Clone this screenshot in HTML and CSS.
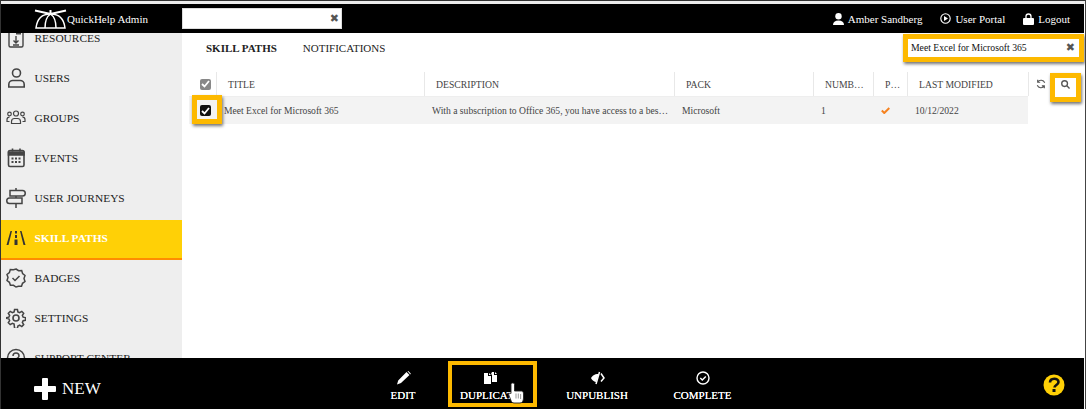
FILE: index.html
```html
<!DOCTYPE html>
<html lang="en">
<head>
<meta charset="utf-8">
<title>QuickHelp Admin</title>
<link rel="stylesheet" href="styles.css">
</head>
<body>
<div class="app">
  <header class="topbar">
    <div class="brand">
      <svg class="logo" width="33" height="20" viewBox="0 0 33 20" fill="none" stroke="#fff" stroke-width="1.500">
        <path d="M2 19C3 10 8 5 16.500 5S30 10 31 19z"/>
        <path d="M11 19C11 11 13.500 7 16.500 5c3 2 5.500 6 5.500 14"/>
        <path d="M1 1.500l15.500 3.500L32 1.500M16.500 5V1" stroke-width="2"/>
      </svg>
      <span>QuickHelp Admin</span>
    </div>
    <div class="top-search"><span class="x">✖</span></div>
    <nav class="user-nav">
      <span class="user-link"><svg width="11" height="12" viewBox="0 0 11 12" fill="#fff"><circle cx="5.500" cy="3.200" r="3.200"/><path d="M0 12c0-3 2-4.500 5.500-4.500S11 9 11 12z"/></svg>Amber Sandberg</span>
      <span class="user-link"><svg width="11" height="11" viewBox="0 0 11 11"><circle cx="5.500" cy="5.500" r="4.700" fill="none" stroke="#fff" stroke-width="1.100"/><path d="M4 3l4 2.500L4 8z" fill="#fff"/></svg>User Portal</span>
      <span class="user-link"><svg width="11" height="12" viewBox="0 0 11 12"><path d="M3 6V3.500a2.500 2.500 0 015 0V6" fill="none" stroke="#fff" stroke-width="1.300"/><rect y="5" width="11" height="7" rx="1" fill="#fff"/></svg>Logout</span>
    </nav>
  </header>

  <div class="middle">
    <aside class="sidebar">
      <ul class="side-list">
        <li class="side-item"><svg class="side-icon" viewBox="0 0 20 20" fill="none" stroke="#444" stroke-width="1.400"><rect x="3" y="-6" width="14" height="25" rx="1.500"/><path d="M10 8v7M7.500 12.500L10 15l2.500-2.500M7 17h6"/><path d="M10 4h5v2.500h-5z" fill="#444" stroke="none"/></svg>RESOURCES</li>
        <li class="side-item"><svg class="side-icon" viewBox="0 0 20 20" fill="none" stroke="#444" stroke-width="1.600"><circle cx="10.500" cy="5" r="4"/><path d="M2.800 19v-2.500c0-2.500 2-4 4-4h7.400c2 0 4 1.500 4 4V19z"/></svg>USERS</li>
        <li class="side-item"><svg class="side-icon" viewBox="0 0 20 20" fill="none" stroke="#444" stroke-width="1.200"><circle cx="10" cy="5.500" r="2.500"/><circle cx="3.500" cy="6" r="1.800"/><circle cx="16.500" cy="6" r="1.800"/><path d="M5.500 15.500v-2c0-2 1.500-3 3-3h3c1.500 0 3 1 3 3v2zM3.500 13.500H1v-2c0-1.500 1-2.300 2.500-2.300M16.500 13.500H19v-2c0-1.500-1-2.300-2.500-2.300"/></svg>GROUPS</li>
        <li class="side-item"><svg class="side-icon" viewBox="0 0 20 20" fill="none" stroke="#444" stroke-width="1.600"><rect x="2.500" y="2.500" width="15.500" height="16" rx="1.500"/><path d="M2.500 4h15.500v3H2.500z" fill="#444"/><path d="M6.500 .5v3M14 .5v3"/><path d="M5.500 9.500h2v2h-2zM9 9.500h2v2H9zM12.500 9.500h2v2h-2zM5.500 13h2v2h-2zM9 13h2v2H9zM12.500 13h2v2h-2z" fill="#444" stroke="none"/></svg>EVENTS</li>
        <li class="side-item"><svg class="side-icon" viewBox="0 0 20 20" fill="none" stroke="#444" stroke-width="1.500"><path d="M10 0v2.500M10 8v2M10 15.500V20M4 2.500h12.500a2.700 2.700 0 010 5.500H4zM16 10H3.500a2.700 2.700 0 000 5.500H16z"/></svg>USER JOURNEYS</li>
        <li class="side-item active"><svg class="side-icon" viewBox="0 0 20 20" fill="#333"><path d="M4.500 3h1.500L2.500 17H.5zM14 3h1.500l4 14h-2zM9 3h2v2.500H9zM9 7h2v3H9zM8.500 11.500h3V17h-3z"/></svg>SKILL PATHS</li>
        <li class="side-item"><svg class="side-icon" viewBox="0 0 20 20" fill="none" stroke="#444" stroke-width="1.500"><path d="M10 1l2.600 1.700 3.100-.1.900 3 2.400 1.900-1 3 1 3-2.500 1.800-1 3-3 0L10 19l-2.500-1.700-3.100 0-1-3L1 12.500l1-3-1-3 2.400-1.900.9-3 3.100.1z"/><path d="M6.500 10l2.500 2.500 4.500-4.500"/></svg>BADGES</li>
        <li class="side-item"><svg class="side-icon" viewBox="0 0 20 20" fill="none" stroke="#444" stroke-width="1.600"><circle cx="10" cy="10" r="3"/><path d="M8.500 1h3l.5 2.600 1.800.8 2.300-1.400 2 2.100-1.400 2.200.8 1.800 2.500.5v2.800l-2.500.5-.8 1.800 1.400 2.200-2 2.100-2.300-1.400-1.800.8-.5 2.600h-3L8 16.400l-1.800-.8-2.300 1.400-2-2.100 1.400-2.200-.8-1.800-2.500-.5V9.600l2.500-.5.8-1.800L1.900 5.100l2-2.100 2.300 1.400L8 3.600z" transform="translate(.5 .5) scale(.95)"/></svg>SETTINGS</li>
        <li class="side-item"><svg class="side-icon" viewBox="0 0 20 20" fill="none" stroke="#444" stroke-width="1.500"><circle cx="10" cy="10" r="8.500"/><path d="M7 8c0-4 6-4 6 0 0 2-3 2-3 4M10 14v1.500"/></svg>SUPPORT CENTER</li>
      </ul>
    </aside>

    <main class="content">
      <div class="tabs-row">
        <div class="tabs">
          <span class="tab tab-on">SKILL PATHS</span>
          <span class="tab">NOTIFICATIONS</span>
        </div>
        <div class="filter">Meet Excel for Microsoft 365<span class="x">✖</span></div>
      </div>
      <div class="table-wrap">
        <div class="grid head">
          <div class="cell check-cell"><span class="check check-head"><svg width="9" height="8" viewBox="0 0 9 8" fill="none" stroke="#fff" stroke-width="1.800"><path d="M1 4l2.500 2.500L8 1"/></svg></span></div>
          <div class="cell">TITLE</div>
          <div class="cell">DESCRIPTION</div>
          <div class="cell">PACK</div>
          <div class="cell">NUMB…</div>
          <div class="cell">P…</div>
          <div class="cell">LAST MODIFIED</div>
          <div class="tools">
            <svg width="10" height="10" viewBox="0 0 12 12" fill="none" stroke="#555" stroke-width="1.300"><path d="M10.500 4.500A5 5 0 002 3.500M1.500 7.500a5 5 0 008.500 1M2 .8v3h3M10 11.200v-3H7"/></svg>
            <svg width="9" height="9" viewBox="0 0 10 10" fill="none" stroke="#555" stroke-width="1.500"><circle cx="4" cy="4" r="3.200"/><path d="M6.500 6.500L9.500 9.500"/></svg>
          </div>
        </div>
        <div class="grid row">
          <div class="cell check-cell"><span class="check check-row"><svg width="9" height="8" viewBox="0 0 9 8" fill="none" stroke="#fff" stroke-width="1.800"><path d="M1 4l2.500 2.500L8 1"/></svg></span></div>
          <div class="cell">Meet Excel for Microsoft 365</div>
          <div class="cell desc">With a subscription to Office 365, you have access to a best-in-class set of apps</div>
          <div class="cell">Microsoft</div>
          <div class="cell">1</div>
          <div class="cell"><svg width="9" height="7" viewBox="0 0 9 7" fill="none" stroke="#f58220" stroke-width="2"><path d="M.8 3.500l2.500 2.500L8.300 1"/></svg></div>
          <div class="cell">10/12/2022</div>
        </div>
      </div>
    </main>
  </div>

  <footer class="bottombar">
    <div class="new"><svg width="22" height="22" viewBox="0 0 22 22" fill="#fff"><path d="M8 1q0-1 1-1h4q1 0 1 1v7h7q1 0 1 1v4q0 1-1 1h-7v7q0 1-1 1H9q-1 0-1-1v-7H1q-1 0-1-1V9q0-1 1-1h7z"/></svg>NEW</div>
    <div class="actions">
      <div class="action"><svg width="15" height="14" viewBox="0 0 15 14" fill="#fff"><path d="M10.500 1l3 3L5 12 1 13.500 2.200 9.500zM11.500.2l.8-.2 2.500 2.500-.5 1z"/></svg>EDIT</div>
      <div class="action"><svg width="15" height="14" viewBox="0 0 15 14" fill="#fff"><path d="M1 2h4v3h3v8H1zM6 2l2 2H6zM9 1h2v3h3v7H9V4L8 3zM12 1l2 2h-2z"/></svg>DUPLICATE</div>
      <div class="action"><svg width="15" height="14" viewBox="0 0 15 14" fill="none" stroke="#fff" stroke-width="1.500"><path d="M11 2.500L14 7l-3 3.500"/><path d="M9.500 1L6 13"/><path d="M8.500 3C4 3 2.500 5 1 7c1 2 2.500 3.500 5 4l1.500-4z" fill="#fff" stroke="none"/></svg>UNPUBLISH</div>
      <div class="action"><svg width="14" height="14" viewBox="0 0 14 14" fill="none" stroke="#fff" stroke-width="1.400"><circle cx="7" cy="7" r="6"/><path d="M4.300 7l2 2 3.500-3.500"/></svg>COMPLETE</div>
    </div>
    <svg class="help" width="22" height="22" viewBox="0 0 22 22"><circle cx="11" cy="11" r="10.500" fill="#ffd006"/><path d="M7 8.500C7 3.500 15.500 3.500 15.500 8c0 3-4 3-4 5.500" fill="none" stroke="#111" stroke-width="2.600"/><rect x="9.500" y="15" width="3" height="3" fill="#111"/></svg>
  </footer>

  <span class="mark mark-filter"></span>
  <span class="mark mark-check"></span>
  <span class="mark mark-search"></span>
  <span class="mark mark-dup"></span>
  <svg class="cursor" width="16" height="22" viewBox="0 0 16 22"><path d="M3 2.500c0-2 3.500-2 3.500 0V9h7.500c1 .5 1.500 1.500 1.500 3v4c0 3-1.500 5-3.500 5H6c-1.500 0-2.500-1-3-2.500L.8 13c-.5-1.500 1-2.500 2.200-1.500z" fill="#fff" stroke="#222" stroke-width=".9"/><path d="M8 11.500v5M10.300 11.500v5M12.600 12v5" stroke="#555" stroke-width=".6"/></svg>
</div>
</body>
</html>
```
FILE: styles.css
```css
* { box-sizing: border-box; }
html, body { margin: 0; padding: 0; }
body {
  width: 1086px;
  height: 409px;
  overflow: hidden;
  background: #fff;
  font-family: "Liberation Serif", serif;
  color: #222;
}
.app {
  position: relative;
  width: 1086px;
  height: 409px;
  display: flex;
  flex-direction: column;
  border-left: 1px solid #333;
  border-right: 1px solid #444;
  border-top: 1px solid #333;
  background: #fff;
  overflow: hidden;
}
.app::before {
  content: "";
  position: absolute;
  left: 0;
  right: 0;
  top: 0;
  height: 3px;
  background: #ececec;
}
.topbar {
  flex: 0 0 29px;
  margin: 3px 1px 0 0;
  background: #000;
  color: #fff;
  display: flex;
  align-items: center;
  font-size: 11px;
}
.brand {
  width: 181px;
  display: flex;
  align-items: center;
  padding-left: 33px;
  font-size: 11px;
}
.top-search {
  width: 160px;
  height: 21px;
  background: #fff;
  border: 1px solid #ddd;
  display: flex;
  align-items: center;
  justify-content: flex-end;
  padding-right: 2px;
}
.x { color: #555; font-size: 11px; font-family: "DejaVu Sans", sans-serif; }
.user-nav {
  margin-left: auto;
  display: flex;
  gap: 18px;
  padding-right: 14px;
  font-size: 11px;
}
.user-link { display: flex; align-items: center; gap: 4px; }
.middle {
  flex: 1 1 auto;
  min-height: 0;
  display: flex;
}
.sidebar {
  flex: 0 0 181px;
  background: #eee;
  overflow: hidden;
}
.side-list {
  list-style: none;
  margin: -13px 0 0;
  padding: 0;
}
.side-item {
  height: 40px;
  display: flex;
  align-items: center;
  padding: 0 0 4px 5px;
  font-size: 11.400px;
  color: #222;
}
.side-icon {
  width: 20px;
  height: 20px;
  margin-right: 8.500px;
  flex: none;
}
.side-item.active {
  background: #ffd006;
  border-bottom: 2px solid #ff8c00;
  color: #fff;
  font-weight: bold;
  padding-bottom: 2px;
}
.content {
  flex: 1 1 auto;
  min-width: 0;
  padding-left: 7px;
}
.tabs-row {
  height: 39px;
  display: flex;
  align-items: flex-start;
  justify-content: space-between;
}
.tabs {
  display: flex;
  gap: 26px;
  padding: 9px 0 0 17px;
  font-size: 11px;
}
.tab { color: #222; }
.tab-on { font-weight: bold; }
.filter {
  width: 172px;
  height: 19px;
  margin: 5px 5px 0 0;
  padding: 0 5px 0 3px;
  display: flex;
  align-items: center;
  justify-content: space-between;
  font-size: 9.700px;
  color: #111;
  background: #fff;
}
.grid {
  display: grid;
  grid-template-columns: 27px 208px 250px 139px 60px 34px 121px 46px;
  width: 885px;
}
.head {
  height: 24px;
  font-size: 9.700px;
  color: #444;
}
.head .cell {
  border-left: 1px solid #e8e8e8;
  padding-left: 11px;
}
.head .check-cell {
  border-left: 0;
  padding: 0 0 0 6px;
  justify-content: center;
}
.row {
  grid-template-columns: 27px 208px 250px 139px 60px 34px 121px;
  width: 839px;
  height: 28px;
  background: #f3f3f3;
  border-top: 1px solid #eee;
  font-size: 9.600px;
  color: #444;
}
.row .cell { padding-left: 8px; }
.row .check-cell {
  padding: 0 0 0 6px;
  justify-content: center;
}
.cell {
  display: flex;
  align-items: center;
  min-width: 0;
  white-space: nowrap;
  overflow: hidden;
}
.row .desc {
  display: block;
  line-height: 27px;
  text-overflow: ellipsis;
  padding-right: 4px;
}
.check {
  width: 11px;
  height: 11px;
  border-radius: 2px;
  display: flex;
  align-items: center;
  justify-content: center;
}
.check-head { background: #888; }
.check-row { background: #111; }
.tools {
  display: flex;
  align-items: center;
  gap: 15px;
  padding-left: 7px;
  border-left: 1px solid #e8e8e8;
}
.mark {
  position: absolute;
  border: 5px solid #fdb900;
  box-shadow: 1px 2px 3px rgba(0, 0, 0, .55);
  pointer-events: none;
}
.mark-filter { left: 902px; top: 33px; width: 181px; height: 28px; }
.mark-check { left: 191px; top: 94px; width: 30px; height: 29px; }
.mark-search { left: 1049px; top: 72px; width: 31px; height: 29px; }
.mark-dup {
  left: 447px;
  top: 360px;
  width: 89px;
  height: 46px;
  border-width: 4px;
  box-shadow: none;
}
.bottombar {
  flex: 0 0 51px;
  margin-right: 1px;
  background: #000;
  color: #fff;
  display: flex;
  align-items: center;
  position: relative;
}
.new {
  display: flex;
  align-items: center;
  gap: 6px;
  padding: 10px 0 0 33px;
  font-size: 17px;
}
.actions {
  position: absolute;
  left: 372px;
  top: 13px;
  display: flex;
}
.action {
  display: flex;
  flex-direction: column;
  align-items: center;
  gap: 4px;
  width: 60px;
  font-size: 11px;
  text-shadow: 0 0 .4px #fff;
}
.action:nth-child(2) { width: 114px; }
.action:nth-child(3) { width: 100px; }
.action:nth-child(4) { width: 111px; }
.help { margin: 3px 19px 0 auto; }
.cursor { position: absolute; left: 507px; top: 381px; }
```
